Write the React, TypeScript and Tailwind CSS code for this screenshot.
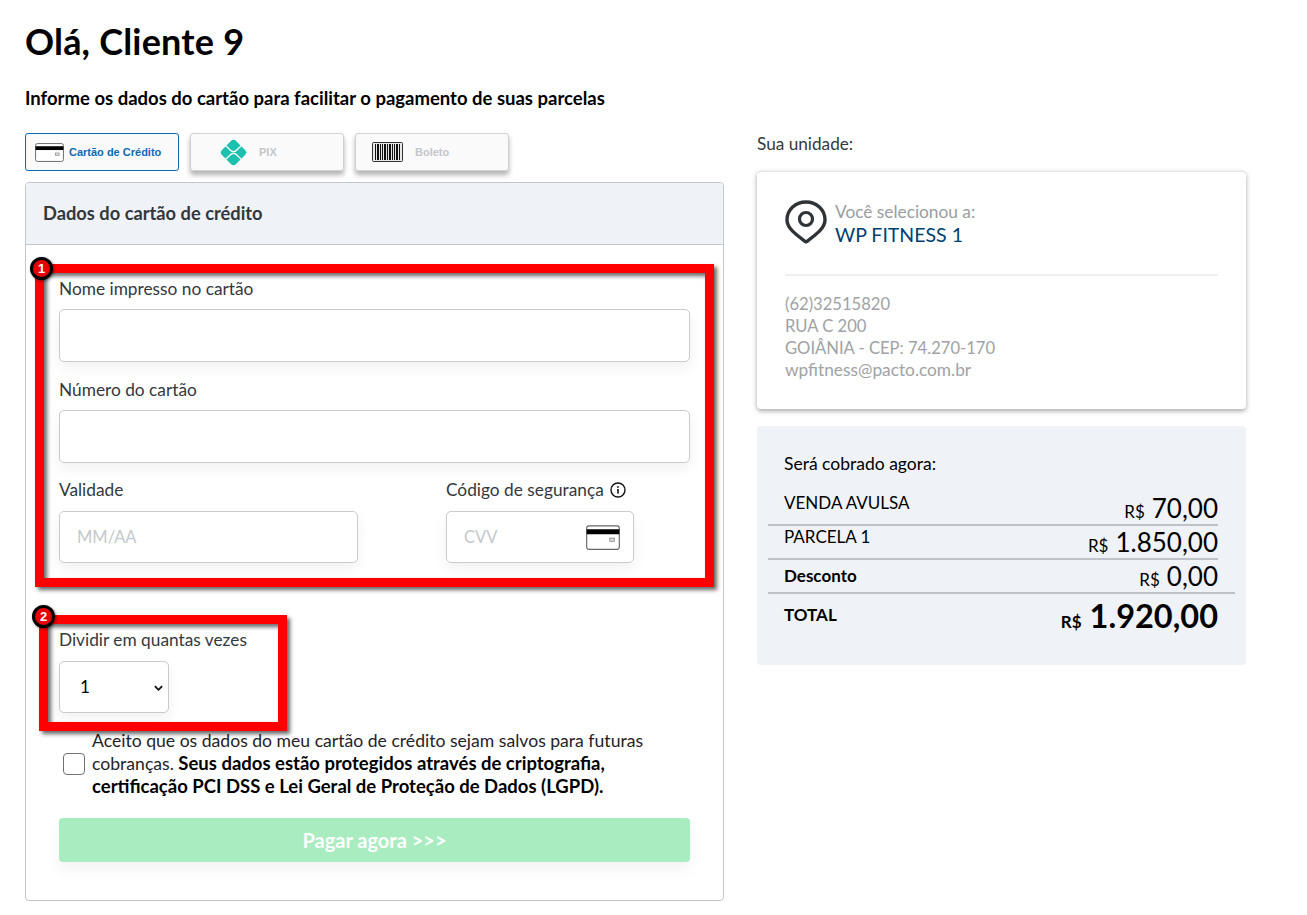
const font = "font-['Lato',sans-serif]";

function CardIcon({ className }: { className?: string }) {
  return (
    <svg viewBox="0 0 30 20" preserveAspectRatio="none" className={className}>
      <rect x="0.6" y="0.6" width="28.8" height="18.8" rx="2" fill="#fff" stroke="#666" strokeWidth="1" />
      <rect x="0.6" y="3.4" width="28.8" height="4" fill="#000" />
      <rect x="21" y="10.5" width="4" height="2.5" fill="#ddd" stroke="#777" strokeWidth="0.6" />
    </svg>
  );
}

function PixIcon() {
  return (
    <svg viewBox="0 0 26 26" className="w-[27px] h-[27px]">
      <rect x="3.4" y="3.4" width="19.2" height="19.2" rx="3.5" fill="#1cc0ae" transform="rotate(45 13 13)" />
      <g fill="none" stroke="#fafafa" strokeWidth="1.3">
        <path d="M4.5 5.5 L10.6 11.2 Q13 13.2 15.4 11.2 L21.5 5.5" />
        <path d="M4.5 20.5 L10.6 14.8 Q13 12.8 15.4 14.8 L21.5 20.5" />
      </g>
    </svg>
  );
}

function BarcodeIcon() {
  const bars = [
    [3, 1], [5, 2], [8, 1], [10, 1], [12, 2], [15, 1], [17, 2], [20, 1], [22, 1], [24, 2], [27, 1],
  ];
  return (
    <svg viewBox="0 0 31 20" className="w-[31px] h-[20px]">
      <rect x="0.5" y="0.5" width="30" height="19" rx="1" fill="#e8e8e8" stroke="#333" />
      {bars.map(([x, w]) => (
        <rect key={x} x={x} y="2" width={w} height="16" fill="#111" />
      ))}
    </svg>
  );
}

function Field({ label, className, children }: { label: React.ReactNode; className?: string; children?: React.ReactNode }) {
  return (
    <div className={className}>
      <div className="text-[17.3px] leading-[20px] text-[#33383d] mb-[10px]">{label}</div>
      {children}
    </div>
  );
}

const inputBox = "rounded-[5px] border border-[#c9cbcf] bg-white shadow-[0_6px_14px_rgba(0,0,0,0.06)]";

function Tab({ active, icon, label, iconBox }: { active?: boolean; icon: React.ReactNode; label: string; iconBox: string }) {
  return (
    <div
      className={`h-[38px] w-[154px] flex items-center rounded-[3px] bg-[#fafafa] border font-['Liberation_Sans',sans-serif] text-[11px] font-bold ${
        active ? "border-[#0a6ab8] text-[#0a6ab8]" : "border-[#cfd1d4] text-[#c4c6c9] shadow-[0_4px_5px_rgba(0,0,0,0.3)]"
      }`}
    >
      <div className={`${iconBox} flex justify-center shrink-0`}>{icon}</div>
      <span>{label}</span>
    </div>
  );
}

function Marker({ n, className }: { n: number; className: string }) {
  return (
    <div className={`absolute w-[23px] h-[23px] rounded-full bg-[#e60000] border-[3px] border-black flex items-center justify-center text-white text-[13px] font-bold font-['Liberation_Sans',sans-serif] shadow-[1px_1px_3px_rgba(0,0,0,0.5)] ${className}`}>
      {n}
    </div>
  );
}

function Row({ label, value }: { label: string; value: string }) {
  return (
    <div className="h-[34px] pl-[16px] flex justify-between text-black border-b-2 border-[#bfc2c8]">
      <span className="text-[17px] leading-[20px] pt-[1px]">{label}</span>
      <span className="text-[26px] leading-[32px]">
        <span className="text-[17px] mr-[7px]">R$</span>
        {value}
      </span>
    </div>
  );
}

const annotation = "absolute border-[9px] border-[#ff0000] shadow-[3px_3px_4px_rgba(0,0,0,0.6),inset_3px_3px_4px_rgba(0,0,0,0.6)]";

export default function App() {
  return (
    <div className={`relative min-h-[915px] bg-white pl-[25px] pt-[19px] ${font}`}>
      <h1 className="text-[36px] leading-[44px] font-bold text-black tracking-[0.2px]">Olá, Cliente 9</h1>
      <p className="mt-[24px] text-[18.5px] leading-[22px] font-bold text-black">
        Informe os dados do cartão para facilitar o pagamento de suas parcelas
      </p>

      <div className="flex gap-[33px] mt-[24px] items-start">
        {/* Left column */}
        <div className="w-[699px]">
          <div className="flex gap-[11px]">
            <Tab active icon={<CardIcon className="w-[29px] h-[19px]" />} label="Cartão de Crédito" iconBox="w-[43px] pl-[4px]" />
            <Tab icon={<PixIcon />} label="PIX" iconBox="w-[68px] pl-[17px]" />
            <Tab icon={<BarcodeIcon />} label="Boleto" iconBox="w-[59px] pl-[4px]" />
          </div>

          <div className="mt-[11px] h-[719px] rounded-[4px] border border-[#c3c6cb]">
            <div className="h-[62px] bg-[#eff2f7] border-b border-[#c3c6cb] rounded-t-[4px] pl-[17px] flex items-center text-[18.3px] font-bold text-[#33383d]">
              Dados do cartão de crédito
            </div>

            <div className="px-[33px] pt-[34px]">
              <Field label="Nome impresso no cartão">
                <div className={`h-[53px] ${inputBox}`} />
              </Field>
              <Field label="Número do cartão" className="mt-[18px]">
                <div className={`h-[53px] ${inputBox}`} />
              </Field>
              <div className="flex mt-[17px]">
                <Field label="Validade" className="w-[299px]">
                  <div className={`mt-[11px] h-[52px] pl-[17px] flex items-center text-[16.5px] text-[#c5c8cc] ${inputBox}`}>MM/AA</div>
                </Field>
                <Field
                  className="ml-[88px] w-[188px]"
                  label={
                    <span className="flex items-center gap-[6px]">
                      Código de segurança
                      <svg viewBox="0 0 16 16" className="w-[16px] h-[16px]">
                        <circle cx="8" cy="8" r="7" fill="none" stroke="#111" strokeWidth="1.4" />
                        <rect x="7.2" y="7" width="1.6" height="4.6" fill="#111" />
                        <rect x="7.2" y="4.2" width="1.6" height="1.6" fill="#111" />
                      </svg>
                    </span>
                  }
                >
                  <div className={`mt-[11px] h-[52px] pl-[17px] pr-[13px] flex items-center justify-between text-[16.5px] text-[#c5c8cc] ${inputBox}`}>
                    CVV
                    <CardIcon className="w-[34px] h-[25px]" />
                  </div>
                </Field>
              </div>

              <Field label="Dividir em quantas vezes" className="mt-[67px]">
                <div className={`relative mt-[11px] h-[52px] w-[110px] pl-[20px] flex items-center text-[17px] text-black ${inputBox}`}>
                  1
                  <svg viewBox="0 0 10 6" className="absolute right-[5px] top-[23px] w-[9px] h-[6px]">
                    <path d="M1 1 L5 5 L9 1" fill="none" stroke="#111" strokeWidth="2" />
                  </svg>
                </div>
              </Field>

              <div className="flex items-center mt-[17px] ml-[4px]">
                <div className="w-[22px] h-[22px] shrink-0 rounded-[4px] border border-[#6f7377] bg-white" />
                <p className="ml-[7px] text-[17.6px] leading-[22px] text-[#1f2327]">
                  Aceito que os dados do meu cartão de crédito sejam salvos para futuras cobranças.{" "}
                  <b className="text-[18.5px] leading-[22px] text-black">Seus dados estão protegidos através de criptografia, certificação PCI DSS e Lei Geral de Proteção de Dados (LGPD).</b>
                </p>
              </div>

              <div className="mt-[20px] h-[44px] rounded-[4px] bg-[#a8ecc0] flex items-center justify-center text-white text-[20px] font-bold shadow-[0_8px_16px_rgba(0,0,0,0.05)]">
                Pagar agora &gt;&gt;&gt;
              </div>
            </div>
          </div>
        </div>

        {/* Right column */}
        <div className="w-[489px]">
          <p className="text-[17.2px] leading-[22px] text-[#33383d]">Sua unidade:</p>
          <div className="mt-[16px] h-[238px] rounded-[4px] bg-white border-t border-[#e3e4e6] shadow-[0_2px_5px_rgba(0,0,0,0.35)] px-[28px] pt-[28px]">
            <div className="flex items-start gap-[8px] h-[76px] border-b-2 border-[#eeeeef]">
              <svg viewBox="0 0 42 44" className="w-[42px] h-[44px] shrink-0">
                <path d="M21 2 C10 2 2 10 2 20 C2 29 13 36 21 42 C29 36 40 29 40 20 C40 10 32 2 21 2 Z" fill="none" stroke="#2e3338" strokeWidth="3.4" strokeLinejoin="round" />
                <circle cx="21" cy="19" r="6.5" fill="none" stroke="#2e3338" strokeWidth="3.2" />
              </svg>
              <div className="pt-[2px]">
                <div className="text-[17.3px] leading-[20px] text-[#9a9da1]">Você selecionou a:</div>
                <div className="text-[19.5px] leading-[26px] text-[#003f6f]">WP FITNESS 1</div>
              </div>
            </div>
            <div className="mt-[17px] text-[16.6px] leading-[22px] text-[#a0a2a5]">
              <div>(62)32515820</div>
              <div>RUA C 200</div>
              <div>GOIÂNIA - CEP: 74.270-170</div>
              <div className="text-[17.3px]">wpfitness@pacto.com.br</div>
            </div>
          </div>

          <div className="mt-[17px] h-[239px] rounded-[4px] bg-[#eff2f7] pl-[11px] pt-[27px]">
            <div className="pl-[16px] text-[17.5px] leading-[22px] text-black mb-[17px]">Será cobrado agora:</div>
            <div className="w-[450px]">
              <Row label="VENDA AVULSA" value="70,00" />
              <Row label="PARCELA 1" value="1.850,00" />
              <div className="h-[32px] pl-[16px] flex justify-between text-black">
                <span className="text-[17px] leading-[20px] pt-[6px] font-bold">Desconto</span>
                <span className="text-[26px] leading-[32px]">
                  <span className="text-[17px] mr-[7px]">R$</span>0,00
                </span>
              </div>
            </div>
            <div className="w-[467px]">
              <div className="h-[2px] bg-[#bfc2c8]" />
              <div className="pl-[16px] pr-[17px] flex justify-between text-black font-bold">
                <span className="text-[17px] leading-[20px] pt-[11px]">TOTAL</span>
                <span className="text-[32.5px] leading-[44px]">
                  <span className="text-[17px] mr-[8px]">R$</span>1.920,00
                </span>
              </div>
            </div>
          </div>
        </div>
      </div>

      {/* Red annotation boxes over the form */}
      <div className={`${annotation} left-[35px] top-[264px] w-[679px] h-[323px]`} />
      <div className={`${annotation} left-[39px] top-[615px] w-[248px] h-[116px]`} />
      <Marker n={1} className="left-[30px] top-[257px]" />
      <Marker n={2} className="left-[32px] top-[605px]" />
    </div>
  );
}
